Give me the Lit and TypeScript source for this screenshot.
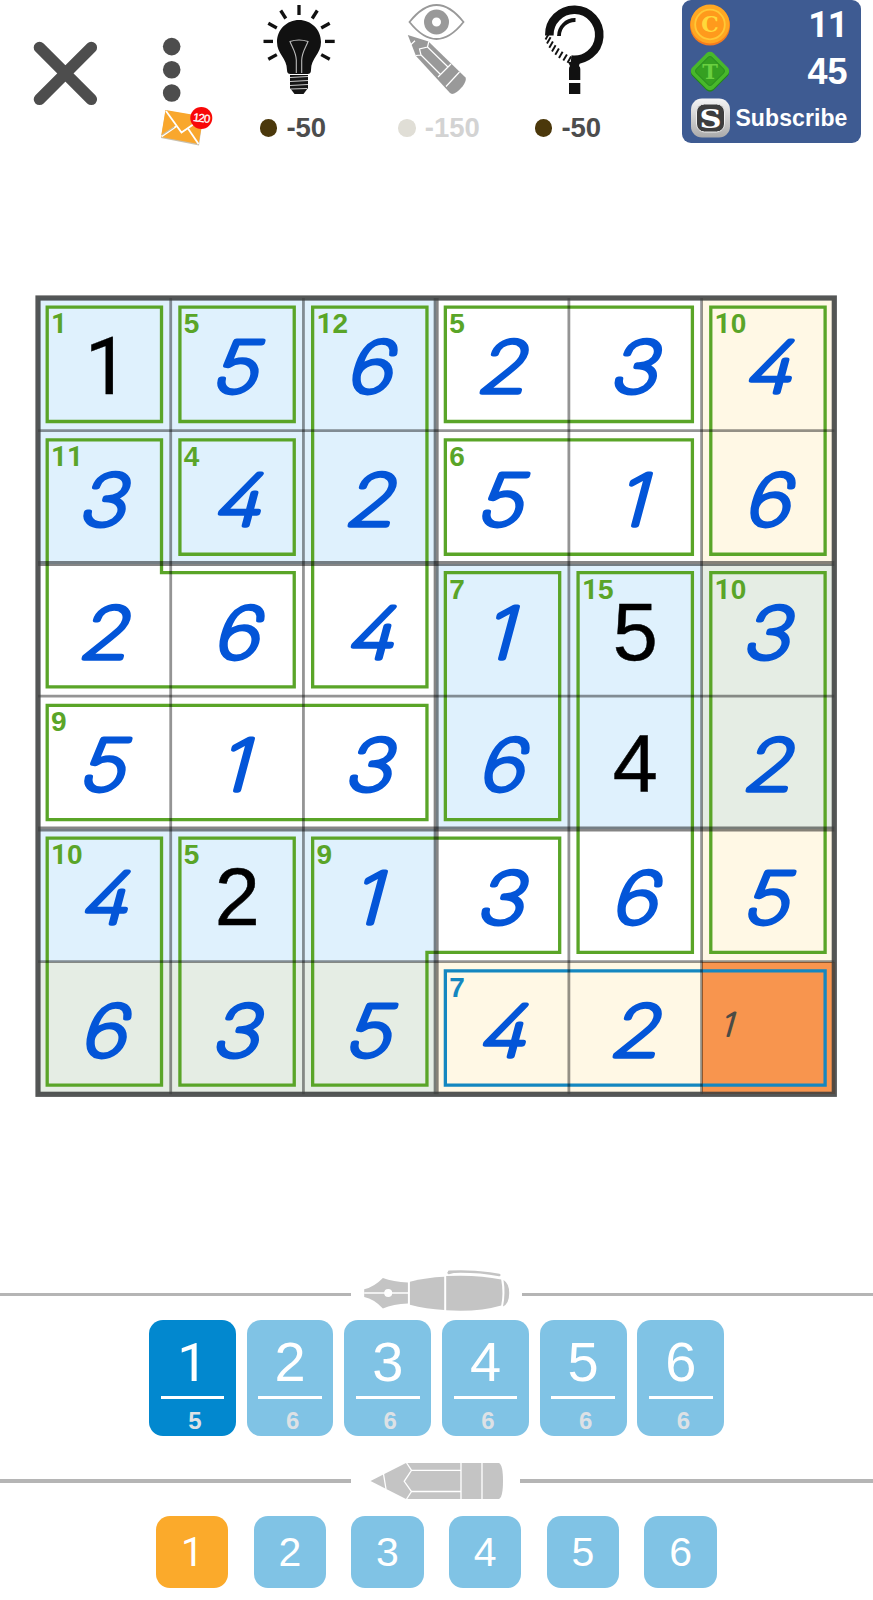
import { LitElement, html, svg, css } from "lit";
import { customElement } from "lit/decorators.js";
import { classMap } from "lit/directives/class-map.js";

type Tone = "blue" | "white" | "cream" | "mix" | "target";
interface Cage { sum: number; row: number; col: number; pts: number[][]; active?: boolean; }

const VALUES = ["156234", "342516", "264153", "513642", "421365", "63542."];
const GIVENS = new Set(["0,0", "2,4", "3,4", "4,1"]);
const TONES: Record<string, Tone> = { b: "blue", w: "white", c: "cream", m: "mix", t: "target" };
const SHADES = ["bbbwwc", "bbbwwc", "wwwbbm", "wwwbbm", "bbbwwc", "mmmcct"];
/* Horizontal anchor of each handwritten figure inside its cell. */
const ANCHOR: Record<string, number> = { "1": 61.5, "2": 64.5, "3": 63, "4": 65, "5": 62.5, "6": 64 };

const P = 132.72;
const IN = 9.2;
/* Corner points are [column line, row line, x side, y side]. */
const box = (c0: number, r0: number, c1: number, r1: number) => [
  [c0, r0, 1, 1], [c1, r0, -1, 1], [c1, r1, -1, -1], [c0, r1, 1, -1],
];
const CAGES: Cage[] = [
  { sum: 1, row: 0, col: 0, pts: box(0, 0, 1, 1) },
  { sum: 5, row: 0, col: 1, pts: box(1, 0, 2, 1) },
  { sum: 12, row: 0, col: 2, pts: box(2, 0, 3, 3) },
  { sum: 5, row: 0, col: 3, pts: box(3, 0, 5, 1) },
  { sum: 10, row: 0, col: 5, pts: box(5, 0, 6, 2) },
  { sum: 11, row: 1, col: 0, pts: [[0, 1, 1, 1], [1, 1, -1, 1], [1, 2, -1, 1], [2, 2, -1, 1], [2, 3, -1, -1], [0, 3, 1, -1]] },
  { sum: 4, row: 1, col: 1, pts: box(1, 1, 2, 2) },
  { sum: 6, row: 1, col: 3, pts: box(3, 1, 5, 2) },
  { sum: 7, row: 2, col: 3, pts: box(3, 2, 4, 4) },
  { sum: 15, row: 2, col: 4, pts: box(4, 2, 5, 5) },
  { sum: 10, row: 2, col: 5, pts: box(5, 2, 6, 5) },
  { sum: 9, row: 3, col: 0, pts: box(0, 3, 3, 4) },
  { sum: 10, row: 4, col: 0, pts: box(0, 4, 1, 6) },
  { sum: 5, row: 4, col: 1, pts: box(1, 4, 2, 6) },
  { sum: 9, row: 4, col: 2, pts: [[2, 4, 1, 1], [4, 4, -1, 1], [4, 5, -1, -1], [3, 5, -1, -1], [3, 6, -1, -1], [2, 6, 1, -1]] },
  { sum: 7, row: 5, col: 3, pts: box(3, 5, 6, 6), active: true },
];

/* Wraps each 1 so it can use a footless figure. */
const figures = (s: string | number) =>
  [...String(s)].map((ch) => (ch === "1" ? html`<span class="one">1</span>` : ch));

@customElement("cage-board")
class CageBoard extends LitElement {
  static styles = css`
    :host { display: block; position: relative; width: 796.3px; height: 796.3px; font-family: "Liberation Sans", Arial, sans-serif; }
    .grid { display: grid; grid-template: repeat(6, 1fr) / repeat(6, 1fr); width: 100%; height: 100%; }
    .cell { min-width: 0; min-height: 0; }
    .cell svg { display: block; width: 100%; height: 100%; }
    .blue { background: #dff1fd; }
    .white { background: #fff; }
    .cream { background: #fff8e5; }
    .mix { background: #e5ede4; }
    .target { background: #f8954e; }
    .overlay { position: absolute; inset: 0; width: 100%; height: 100%; overflow: visible; }
    .given { font-size: 81px; fill: #000; stroke: #000; stroke-width: 0.5; text-anchor: middle; }
    .given1 { font-family: Roboto, sans-serif; font-size: 79px; stroke-width: 0.3; }
    .hand { font-family: Inter, sans-serif; font-weight: 100; font-size: 70px; font-feature-settings: "cv02" 1; fill: #0355d8; stroke: #0355d8; stroke-width: 5.4; stroke-linejoin: round; stroke-linecap: round; text-anchor: middle; }
    .note { font-size: 32px; fill: #4b4b45; stroke: #4b4b45; stroke-width: 2.2; }
    .cage { fill: none; stroke: #5aa528; stroke-width: 3.3; }
    .cage.active { stroke: #1587c0; }
    .sum { font-weight: bold; font-size: 28px; fill: #5aa528; }
    .sum.active { fill: #1587c0; }
    .one { font-family: Roboto, sans-serif; }
    .thin { stroke: #000; stroke-opacity: 0.42; stroke-width: 2.8; }
    .thick { stroke: #000; stroke-opacity: 0.48; stroke-width: 5; }
    .frame { fill: none; stroke: #3c3f3f; stroke-opacity: 0.88; stroke-width: 5.2; }
  `;

  private digit(r: number, c: number) {
    const v = VALUES[r][c];
    if (v === ".") return svg`<text class="hand note" transform="translate(24 74) skewX(-16) scale(1.1 1)">1</text>`;
    if (GIVENS.has(`${r},${c}`))
      return svg`<text class="given ${v === "1" ? "given1" : ""}" x=${v === "1" ? 69 : 66.3} y="96">${v}</text>`;
    return svg`<text class="hand" transform="translate(${ANCHOR[v]} 93.6) skewX(-15) scale(1.16 1)">${v}</text>`;
  }

  render() {
    const cells = VALUES.flatMap((row, r) =>
      [...row].map((_, c) => html`<div class="cell ${TONES[SHADES[r][c]]}">
        <svg viewBox="0 0 132.72 132.72">${this.digit(r, c)}</svg></div>`));
    const lines = [1, 2, 3, 4, 5];
    return html`<div class="grid">${cells}</div>
      <svg class="overlay" viewBox="0 0 796.3 796.3">
        ${CAGES.map((g) => svg`
          <polygon class="cage ${g.active ? "active" : ""}" points=${g.pts.map(([x, y, sx, sy]) => `${x * P + sx * IN},${y * P + sy * IN}`).join(" ")}></polygon>
          <text class="sum ${g.active ? "active" : ""}" x=${g.col * P + 13} y=${g.row * P + 35.3}>${[...String(g.sum)].map((ch) => svg`<tspan class=${ch === "1" ? "one" : ""}>${ch}</tspan>`)}</text>`)}
        ${lines.map((i) => svg`
          <line class=${i === 3 ? "thick" : "thin"} x1=${i * P} x2=${i * P} y1="0" y2="796.3"></line>
          <line class=${i % 2 === 0 ? "thick" : "thin"} y1=${i * P} y2=${i * P} x1="0" x2="796.3"></line>`)}
        <rect class="frame" width="796.3" height="796.3"></rect>
      </svg>`;
  }
}

@customElement("app-root")
class AppRoot extends LitElement {
  static styles = css`
    :host { display: block; width: 873px; height: 1600px; overflow: hidden; background: #fff; font-family: "Liberation Sans", Arial, sans-serif; }
    svg { display: block; flex: none; }
    .page { display: flex; flex-direction: column; height: 100%; }
    .top { display: flex; flex: none; height: 298.2px; align-items: flex-start; }
    .tool { display: flex; flex-direction: column; align-items: center; }
    .peek { margin-left: 11px; }
    .price { display: flex; align-items: center; gap: 9px; height: 32px; margin-top: 2px; font-weight: bold; font-size: 27.5px; color: #4d4d4d; }
    .coin { width: 17.6px; height: 17.6px; border-radius: 50%; background: #4b380b; }
    .off { color: #d3d3d3; }
    .off .coin { background: #e0ded6; }
    .one { font-family: Roboto, sans-serif; font-size: 0.97em; }
    .wallet { display: grid; grid-template-rows: 47px 47px 45px; box-sizing: border-box; width: 179px; height: 143px; margin-left: 50px; padding: 1px 13.5px 3px 8px; border-radius: 9px; background: #3e5b92; color: #fff; font-weight: bold; }
    .entry { display: flex; align-items: center; justify-content: space-between; font-size: 36px; }
    .entry.first .one { font-size: 1em; letter-spacing: -1px; }
    .subscribe { font-size: 23px; letter-spacing: 0.1px; }
    .subscribe span { padding-top: 1px; }
    .board { margin-left: 38.3px; flex: none; }
    .divider { display: flex; align-items: center; flex: none; }
    .rule { height: 3.2px; background: #b5b5b5; width: 350.5px; }
    .rule.rest { flex: 1; width: auto; }
    .ink { margin-top: 174.5px; height: 51px; }
    .graphite { margin-top: 21.4px; height: 48px; }
    .keys { display: flex; flex: none; color: #fff; }
    .pens { margin-left: 149px; gap: 10.9px; }
    .pencils { margin: 11px 0 0 156px; gap: 25.4px; }
    .key { display: flex; flex-direction: column; align-items: center; background: #80c3e5; }
    .pen { width: 86.8px; height: 115.6px; border-radius: 14px; }
    .pen.on { background: #0288cf; }
    .big { flex: none; height: 76px; line-height: 84px; font-size: 56px; }
    .bar { flex: none; width: 63.5px; height: 3px; background: #fff; }
    .left { flex: none; margin-left: 5px; line-height: 43px; font-size: 24px; font-weight: bold; color: #dde1e5; }
    .pencil { width: 72.3px; height: 72.3px; border-radius: 14px; line-height: 73px; font-size: 41px; }
    .pencil.on { background: #fbaa2b; }
    .badge, .slab { text-anchor: middle; font-weight: bold; }
    .badge { font-family: "Liberation Sans", sans-serif; font-size: 11.5px; font-weight: normal; fill: #fff; stroke: #fff; stroke-width: 0.3; }
    .slab { font-family: "DejaVu Serif", serif; }
  `;

  private rays = [
    [299, 5, 299, 15], [280.7, 10.5, 285.8, 18.5], [317.3, 10.5, 312.2, 18.5],
    [268.3, 23.3, 276.8, 28], [329.7, 23.3, 321.2, 28], [263.5, 41.4, 273, 41.4],
    [325, 41.4, 334.7, 41.4], [268.3, 59.3, 276.8, 54.6], [329.7, 59.3, 321.2, 54.6],
  ];
  private hatch = [[545.5, 39.5], [547, 43.5], [549.3, 47.8], [552, 51.5], [555.3, 54.8], [559, 58], [563.3, 60.6], [567.5, 62.8]];

  render() {
    const price = (v: string, off = false) =>
      html`<div class=${classMap({ price: true, off })}><span class="coin"></span><span>${v}</span></div>`;
    return html`<div class="page">
      <header class="top">
        <svg width="140" height="145" viewBox="0 0 140 145"><path d="M39.5 47.5 91.3 99.3M91.3 47.5 39.5 99.3" stroke="#4d4d4d" stroke-width="11.6" stroke-linecap="round"/></svg>
        <svg width="83" height="150" viewBox="140 0 83 150">
          <g fill="#4d4d4d"><circle cx="171.7" cy="46.6" r="8.8"/><circle cx="171.7" cy="69.8" r="8.8"/><circle cx="171.7" cy="93" r="8.8"/></g>
          <path d="M165.5 110.5 203 117 199 145.5 161 138Z" fill="#c9c0ae"/>
          <path d="M165.5 110 203.5 116.5 198.5 144 161 137Z" fill="#f9a72d"/>
          <path d="M161.5 136.5 176 126.5M166 111 181.5 132.5 202 118.5" fill="none" stroke="#fff" stroke-width="1.8"/>
          <path d="M188 128.5 198.5 144" stroke="#fff" stroke-width="1.8"/>
          <path d="M162 135 174 127" stroke="#c8b99b" stroke-width="1.2"/>
          <circle cx="201.3" cy="118" r="11" fill="#f80808"/>
          <text class="badge" transform="translate(201.3 122) rotate(7)" textLength="17">120</text>
        </svg>
        <div class="tool">
          <svg width="140" height="110" viewBox="223 0 140 110">
            ${this.rays.map(([a, b, c, d]) => svg`<line x1=${a} y1=${b} x2=${c} y2=${d} stroke="#111" stroke-width="3.3"/>`)}
            <path d="M299 20C311 20 321 29.500 321 42 321 54 311 58 311 70 311 73 309.500 74 307.500 74H290.500C288.500 74 287 73 287 70 287 58 277 54 277 42 277 29.500 287 20 299 20Z" fill="#111"/>
            <path d="M296.300 73V60C296 52 292 47 290 41.500Q299 38.500 308 41.500C306 47 302 52 301.700 60V73" fill="none" stroke="#bbb" stroke-width="1.1"/>
            <path d="M290 75H308V88L303.500 94H294.500L290 88Z" fill="#151515"/>
            <path d="M290 77.500 308 76.500M290 81.500 308 80.500M290 85.500 308 84.500M291 89 307 88.500" stroke="#ccc" stroke-width="1"/>
          </svg>
          ${price("-50")}
        </div>
        <div class="tool peek">
          <svg width="130" height="110" viewBox="374 0 130 110">
            <path d="M409.500 22Q436.500-12 463.500 22 436.500 56 409.500 22Z" fill="none" stroke="#999" stroke-width="1.8"/>
            <circle cx="436.500" cy="22" r="8.500" fill="none" stroke="#999" stroke-width="8"/>
            <path d="M407.800 35 428.500 41.500 465.500 77.500Q467 80 462.500 86.500 456 94 452 94L450 93 416 56Z" fill="#999"/>
            <path d="M410.500 45 415 40.800M416 55.500 421 55 419.500 49 427.500 47 428.800 41.500M421 55 440.500 74.500M427.500 47 448 67M438 77 451 64M446 86.500 459.500 72" fill="none" stroke="#fff" stroke-width="1.200"/>
          </svg>
          ${price("-150", true)}
        </div>
        <div class="tool">
          <svg width="128" height="110" viewBox="504 0 128 110">
            <path d="M549.300 35.500A25 25 0 1 1 571 59.600" fill="none" stroke="#111" stroke-width="8.600"/>
            <path d="M559 36A16 16 0 0 1 575.500 20" fill="none" stroke="#111" stroke-width="3.800"/>
            ${this.hatch.map(([x, y]) => svg`<line x1=${x} y1=${y} x2=${x + 3.6} y2=${y - 6.2} stroke="#111" stroke-width="1.9"/>`)}
            <path d="M568 62H580L579 66Q580.300 67 580.300 69V80H569V69Q569 67 570 66Z" fill="#111"/>
            <path d="M569 83H580.300V94H569Z" fill="#111"/>
          </svg>
          ${price("-50")}
        </div>
        <div class="wallet">
          <div class="entry first">
            <svg width="40" height="42" viewBox="0 0 40 42"><circle cx="20" cy="21.500" r="20" fill="#f57c1e"/><circle cx="20" cy="20" r="19.500" fill="#ffa722"/><circle cx="20" cy="20.500" r="14.800" fill="#ff9a1c" stroke="#ffc836" stroke-width="1.800"/><text class="slab" x="20" y="28" font-size="22" fill="#ffd93b">C</text></svg>
            <span>${figures(11)}</span>
          </div>
          <div class="entry">
            <svg width="40" height="42" viewBox="0 0 40 42"><rect x="5" y="6.500" width="30" height="30" rx="5" transform="rotate(45 20 21.500)" fill="#23861b"/><rect x="5" y="5" width="30" height="30" rx="5" transform="rotate(45 20 20)" fill="#48b82b"/><rect x="9" y="9" width="22" height="22" rx="3" transform="rotate(45 20 20)" fill="#35a021" stroke="#2c9120"/><text class="slab" x="20" y="28" font-size="21" fill="#6ad040">T</text></svg>
            <span>45</span>
          </div>
          <div class="entry subscribe">
            <svg width="40" height="40" viewBox="0 0 40 40"><defs><linearGradient id="steel" x1="0" y1="0" x2="0" y2="1"><stop offset="0" stop-color="#f5f5f5"/><stop offset="1" stop-color="#aaa"/></linearGradient></defs><rect x="1" y="0.500" width="39" height="39" rx="11" fill="url(#steel)"/><rect x="6.500" y="6" width="28" height="28" rx="8" fill="#3d3d3d" stroke="#eee"/><text class="slab" transform="translate(20.500 29.500) scale(1.15 1)" font-size="26.500" fill="#fff">S</text></svg>
            <span>Subscribe</span>
          </div>
        </div>
      </header>
      <cage-board class="board"></cage-board>
      <div class="divider ink">
        <span class="rule"></span>
        <svg width="171" height="51" viewBox="350.800 1269 171 51" fill="#c4c4c4">
          <path d="M364 1289.300Q374 1287 382.700 1278 393 1282 407.700 1282.400V1303.600Q393 1304 382.700 1308.600 374 1299 364 1297Z"/>
          <path d="M364 1293H408" stroke="#fff" stroke-width="1.500"/><circle cx="388" cy="1293" r="4" fill="#fff"/>
          <path d="M409.700 1281.700Q426 1277.500 444 1276.700V1310Q426 1309 409.700 1304.700Z"/>
          <path d="M446 1276Q478 1274.500 501 1279.500 503.500 1293 501 1305.500 478 1312.300 446 1310.300Z"/>
          <path d="M503.300 1280Q509 1283.500 509 1293 509 1303.500 502.800 1306.500 505.500 1293 503.300 1280Z"/>
          <path d="M448.500 1272.800 453 1272M449 1271.800Q475 1270.500 499 1275" fill="none" stroke="#c4c4c4" stroke-width="2.700" stroke-linecap="round"/>
        </svg>
        <span class="rule rest"></span>
      </div>
      <div class="keys pens">
        ${[5, 6, 6, 6, 6, 6].map((left, i) => html`<div class=${classMap({ key: true, pen: true, on: i === 0 })}>
          <span class="big">${figures(i + 1)}</span><span class="bar"></span><span class="left">${left}</span></div>`)}
      </div>
      <div class="divider graphite">
        <span class="rule"></span>
        <svg width="169" height="48" viewBox="351 1457 169 48">
          <path d="M370.500 1481 406 1463H499Q503 1465 503 1481 503 1497 499 1499H406Z" fill="#c4c4c4"/>
          <path d="M383.500 1474 386 1489M406 1462 411.500 1470.300 404.200 1481.300 411.500 1491.500 406 1500M411.500 1470.300H461M411.500 1491.500H461M461 1462V1500M482 1462V1500" fill="none" stroke="#fff" stroke-width="1.300"/>
        </svg>
        <span class="rule rest"></span>
      </div>
      <div class="keys pencils">
        ${[1, 2, 3, 4, 5, 6].map((n) => html`<div class=${classMap({ key: true, pencil: true, on: n === 1 })}><span>${figures(n)}</span></div>`)}
      </div>
    </div>`;
  }
}
